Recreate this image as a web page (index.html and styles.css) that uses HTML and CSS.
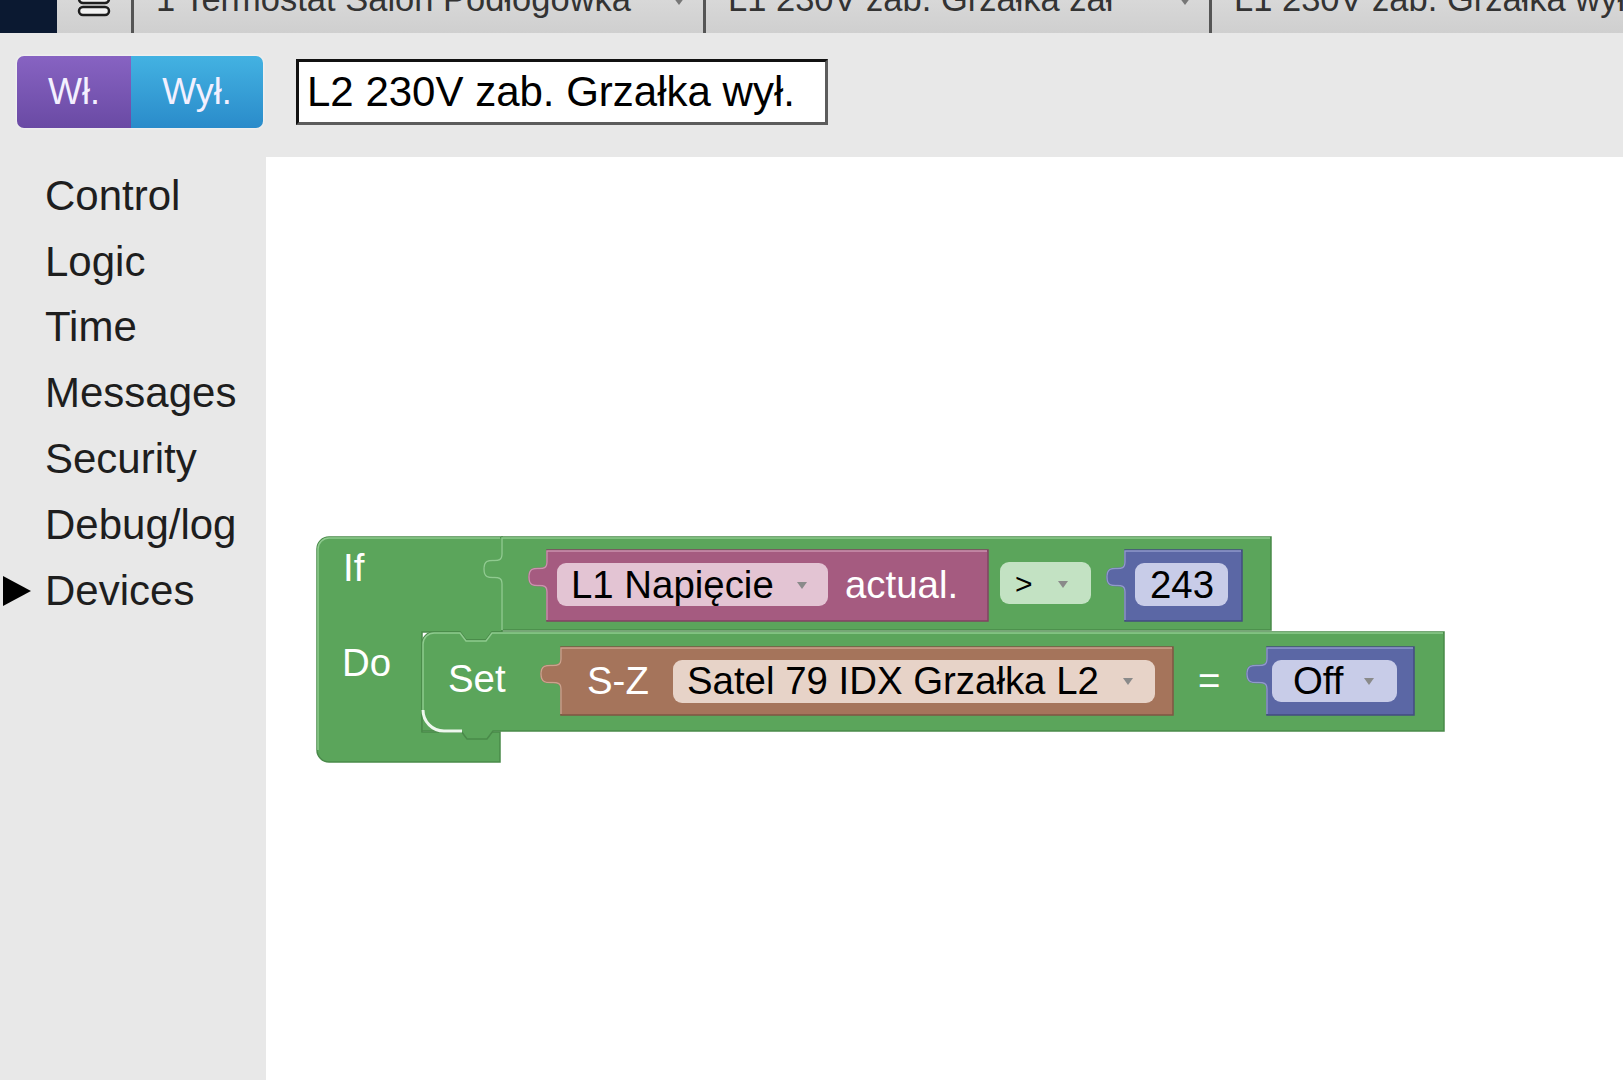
FILE: index.html
```html
<!DOCTYPE html>
<html lang="pl">
<head>
  <meta charset="UTF-8" />
  <title>Zdarzenia</title>
  <link rel="stylesheet" href="styles.css">
</head>
<body>
  <div class="tabs">
    <div class="brand"></div>
    <div class="menu">
      <svg width="34" height="18" viewBox="0 0 34 18">
        <rect x="2" y="-6" width="30" height="9" rx="4" fill="#f2f2f2" stroke="#1d1d1d" stroke-width="2.5"/>
        <rect x="2" y="7" width="30" height="8" rx="4" fill="#f2f2f2" stroke="#1d1d1d" stroke-width="2.5"/>
      </svg>
    </div>
    <div class="tab tab-1"><span class="tab-label">1 Termostat Salon Podłogówka</span><span class="caret"></span></div>
    <div class="tab tab-2"><span class="tab-label">L1 230V zab. Grzałka zał</span><span class="caret"></span></div>
    <div class="tab tab-3"><span class="tab-label">L1 230V zab. Grzałka wył.</span></div>
  </div>

  <div class="toolbar">
    <div class="switch">
      <button class="btn-on">Wł.</button>
      <button class="btn-off">Wył.</button>
    </div>
    <input class="name" type="text" value="L2 230V zab. Grzałka wył." />
  </div>

  <div class="main">
    <ul class="toolbox">
      <li><span class="arrow"></span>Control</li>
      <li><span class="arrow"></span>Logic</li>
      <li><span class="arrow"></span>Time</li>
      <li><span class="arrow"></span>Messages</li>
      <li><span class="arrow"></span>Security</li>
      <li><span class="arrow"></span>Debug/log</li>
      <li><span class="arrow"><svg width="32" height="32" viewBox="0 0 32 32"><polygon points="3,1 31,16 3,31" fill="#000"/></svg></span>Devices</li>
    </ul>

    <div class="workspace">
      <svg class="blocks" width="1357" height="923">
        <g transform="translate(-266 -157)">
          <!-- If / Do -->
          <path class="b-green" d="M317,549 A12,12 0 0 1 329,537 H502 V632 H492 L486,640 H466 L460,632 H422 V732 H500 V762 H329 A12,12 0 0 1 317,750 Z"/>
          <path class="hl hl-green" d="M318,750 V549 A11,11 0 0 1 329,538 H500"/>

          <!-- compare -->
          <path class="b-green" d="M502,537 H1271 V630 H502 V584 c0,-14 -18,2 -18,-15 c0,-17 18,-1 18,-15 Z"/>
          <path class="hl hl-green" d="M502,630 V584 c0,-14 -18,2 -18,-15 c0,-17 18,-1 18,-15 V538 H1270"/>

          <!-- value: device -->
          <path class="b-mag" d="M547,550 H988 V621 H547 V592 c0,-14 -18,2 -18,-15 c0,-17 18,-1 18,-15 Z"/>
          <path class="hl hl-mag" d="M547,620 V592 c0,-14 -18,2 -18,-15 c0,-17 18,-1 18,-15 V551 H987"/>
          <rect class="f-mag" x="557" y="563" width="271" height="43" rx="9"/>
          <text class="fld" x="571" y="598">L1 Napięcie</text>
          <polygon class="dd" points="797,582 807,582 802,589"/>
          <text class="lbl" x="845" y="598">actual.</text>

          <!-- operator -->
          <rect class="f-green" x="1000" y="562" width="91" height="42" rx="9"/>
          <text class="fld op" x="1015" y="594">&gt;</text>
          <polygon class="dd" points="1058,581 1068,581 1063,588"/>

          <!-- number -->
          <path class="b-blue" d="M1125,550 H1242 V621 H1125 V592 c0,-14 -18,2 -18,-15 c0,-17 18,-1 18,-15 Z"/>
          <path class="hl hl-blue" d="M1125,620 V592 c0,-14 -18,2 -18,-15 c0,-17 18,-1 18,-15 V551 H1241"/>
          <rect class="f-blue" x="1135" y="563" width="93" height="43" rx="9"/>
          <text class="fld" x="1150" y="598">243</text>

          <!-- Set -->
          <path class="b-green" d="M422,644 A12,12 0 0 1 434,632 H460 L466,640 H486 L492,632 H1444 V731 H493 L487,739 H467 L461,731 H422 Z"/>
          <path class="hl hl-green" d="M423,712 V644 A11,11 0 0 1 434,633 H460 L466,641 H486 L492,633 H1443"/>
          <path class="hl hl-white" d="M423,710 A21,21 0 0 0 444,731 H462"/>

          <path class="b-brown" d="M561,647 H1173 V715 H561 V689 c0,-14 -20,2 -20,-15 c0,-17 20,-1 20,-15 Z"/>
          <path class="hl hl-brown" d="M561,714 V689 c0,-14 -20,2 -20,-15 c0,-17 20,-1 20,-15 V648 H1172"/>
          <text class="lbl" x="587" y="694">S-Z</text>
          <rect class="f-brown" x="673" y="660" width="482" height="43" rx="9"/>
          <text class="fld" x="687" y="694">Satel 79 IDX Grzałka L2</text>
          <polygon class="dd" points="1123,678 1133,678 1128,685"/>

          <text class="lbl" x="1198" y="694">=</text>

          <path class="b-blue" d="M1267,647 H1414 V715 H1267 V689 c0,-14 -20,2 -20,-15 c0,-17 20,-1 20,-15 Z"/>
          <path class="hl hl-blue" d="M1267,714 V689 c0,-14 -20,2 -20,-15 c0,-17 20,-1 20,-15 V648 H1413"/>
          <rect class="f-blue" x="1272" y="660" width="125" height="42" rx="9"/>
          <text class="fld" x="1293" y="694">Off</text>
          <polygon class="dd" points="1364,678 1374,678 1369,685"/>

          <!-- labels -->
          <text class="lbl" x="343" y="581">If</text>
          <text class="lbl" x="342" y="676">Do</text>
          <text class="lbl" x="448" y="692">Set</text>
        </g>
      </svg>
    </div>
  </div>
</body>
</html>
```

FILE: styles.css
```css
body {
  margin: 0;
  height: 1080px;
  overflow: hidden;
  font-family: "Liberation Sans", Arial, sans-serif;
  background-color: #e8e8e8;
}

/* zakładki u góry */
.tabs {
  display: flex;
  height: 33px;
  background: linear-gradient(#d8d8d8, #cfcfcf);
  overflow: hidden;
}
.brand {
  width: 57px;
  flex: none;
  background-color: #0b1931;
}
.menu {
  width: 74px;
  flex: none;
  padding-left: 20px;
  box-sizing: border-box;
}
.tab {
  display: flex;
  align-items: flex-end;
  box-sizing: border-box;
  border-left: 3px solid #555;
  padding: 0 18px 14px 22px;
  font-size: 34.5px;
  line-height: 40px;
  color: #333;
  white-space: nowrap;
  overflow: hidden;
}
.tab-1 {
  width: 572px;
  flex: none;
}
.tab-2 {
  width: 506px;
  flex: none;
}
.tab-3 {
  flex: 1;
}
.caret {
  align-self: flex-start;
  margin-left: auto;
  margin-top: -3px;
  width: 0;
  height: 0;
  border-left: 6px solid transparent;
  border-right: 6px solid transparent;
  border-top: 8px solid #777;
}

/* pasek z przyciskami */
.toolbar {
  display: flex;
  align-items: flex-start;
  gap: 33px;
  height: 124px;
  box-sizing: border-box;
  padding: 23px 0 0 17px;
}
.switch {
  display: flex;
  height: 72px;
  border-radius: 7px;
  overflow: hidden;
  box-shadow: 0 0 3px rgba(255,255,255,0.9);
}
.switch button {
  border: none;
  padding: 0;
  font-family: "Liberation Sans", Arial, sans-serif;
  font-size: 36px;
  color: #f3f0ff;
  cursor: pointer;
}
.btn-on {
  width: 114px;
  background: linear-gradient(#8763c2, #6a4aa4);
}
.btn-off {
  width: 132px;
  background: linear-gradient(#43b2e2, #2a8bca);
}
.name {
  margin-top: 3px;
  width: 532px;
  height: 66px;
  box-sizing: border-box;
  border: 3px solid;
  border-color: #111 #5c5c5c #5c5c5c #111;
  padding: 0 0 0 8px;
  font-family: "Liberation Sans", Arial, sans-serif;
  font-size: 42px;
  color: #000;
  background-color: #fff;
}

/* lewa kolumna + obszar roboczy */
.main {
  display: flex;
  height: 923px;
}
.toolbox {
  width: 266px;
  flex: none;
  margin: 0;
  padding: 6px 0 0;
  list-style: none;
}
.toolbox li {
  display: flex;
  align-items: center;
  height: 65.8px;
  font-size: 42px;
  color: #1e1e1e;
}
.toolbox .arrow {
  width: 45px;
  flex: none;
  display: flex;
  align-items: center;
}
.workspace {
  flex: 1;
  position: relative;
  background-color: #fff;
  overflow: hidden;
}
.blocks {
  position: absolute;
  left: 0;
  top: 0;
}
.blocks text {
  font-family: "Liberation Sans", Arial, sans-serif;
  font-size: 38.4px;
}
.blocks .lbl {
  fill: #fff;
}
.blocks .fld {
  fill: #000;
}
.blocks .op {
  font-size: 30px;
}
.dd {
  fill: #8a8a8a;
}

.b-green { fill: #5ba55b; stroke: #4a8a4a; stroke-width: 1.5; }
.b-mag { fill: #a55b80; stroke: #804462; stroke-width: 1.5; }
.b-blue { fill: #5b67a5; stroke: #434c80; stroke-width: 1.5; }
.b-brown { fill: #a5745b; stroke: #7f5643; stroke-width: 1.5; }

.hl { fill: none; stroke-width: 1.5; }
.hl-green { stroke: #8fcb8f; }
.hl-mag { stroke: #cc92ae; }
.hl-blue { stroke: #9099cc; }
.hl-brown { stroke: #cca28d; }
.hl-white { stroke: #eef8ee; stroke-width: 3; }

.f-mag { fill: #e3c4d3; }
.f-green { fill: #c3e2c3; }
.f-blue { fill: #c8cce8; }
.f-brown { fill: #e7d3c8; }
```
